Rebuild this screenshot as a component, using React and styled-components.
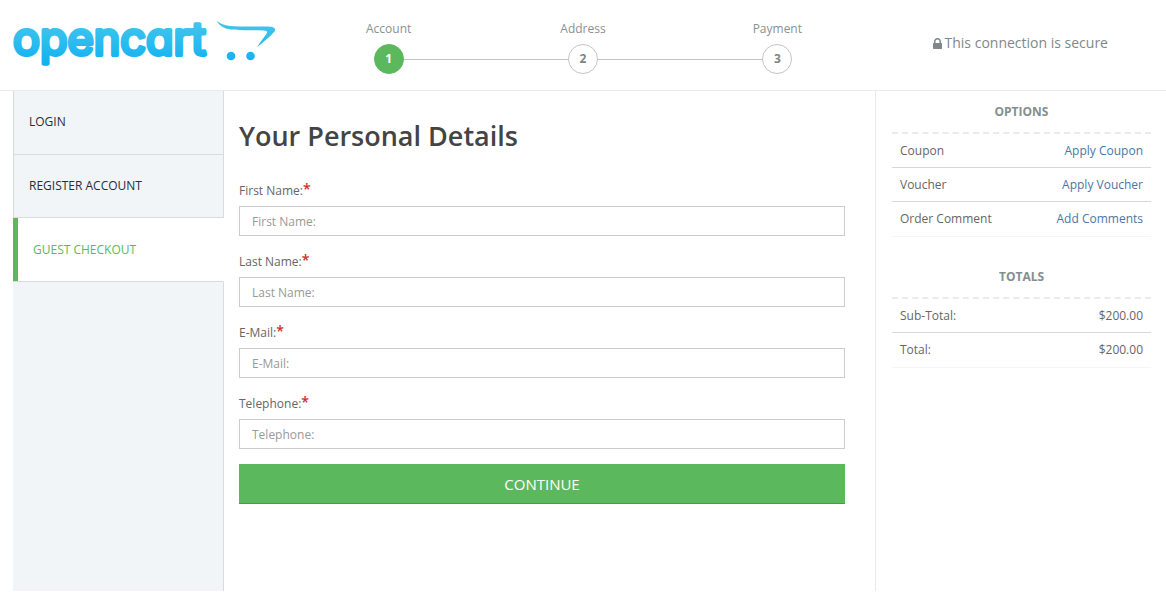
import React from "react";
import styled, { createGlobalStyle, css } from "styled-components";

const GlobalStyle = createGlobalStyle`
  *, *::before, *::after { box-sizing: border-box; }
  body {
    margin: 0;
    background: #fff;
    color: #666;
    font-family: "Open Sans", "Liberation Sans", sans-serif;
    font-size: 12px;
    line-height: 20px;
  }
`;

const Page = styled.div`
  display: flex;
  flex-direction: column;
  min-height: 100vh;
  padding-bottom: 10px;
`;

const Header = styled.header`
  display: grid;
  grid-template-columns: minmax(0, 1fr) minmax(0, 2fr) minmax(0, 1fr);
  min-height: 91px;
  border-bottom: 1px solid #ebebeb;
`;

const LogoLink = styled.a`
  display: block;
  padding-left: 10px;
`;

const LogoDrawing = styled.svg`
  display: block;
  overflow: visible;
`;

const Wordmark = styled.text`
  font-family: Inter, "Open Sans", sans-serif;
  font-size: 45px;
  font-weight: 400;
  font-feature-settings: "cv11";
  stroke-width: 4px;
  stroke-linejoin: round;
`;

const Steps = styled.ol`
  display: grid;
  grid-template-columns: repeat(3, minmax(0, 1fr));
  margin: 0;
  padding: 19px 0 0;
  list-style: none;
  color: #8a9191;
`;

const Step = styled.li`
  display: flex;
  flex-direction: column;
  gap: 5px;
  text-align: center;
`;

const StepTrack = styled.div`
  display: flex;
  align-items: center;
`;

const StepLine = styled.span`
  flex: 1;
  height: 1px;
  background: ${(p) => (p.$hidden ? "transparent" : "#c4c4c4")};
`;

const StepNumber = styled.span`
  width: 30px;
  height: 30px;
  border: 1px solid #c4c4c4;
  border-radius: 50%;
  line-height: 28px;
  font-weight: 700;
  color: #808585;
  ${(p) =>
    p.$active &&
    css`
      border-color: #5cb85c;
      background: #5cb85c;
      color: #fff;
    `}
`;

const Secure = styled.p`
  display: flex;
  justify-content: center;
  align-items: center;
  gap: 3px;
  margin: 0;
  padding-bottom: 4px;
  font-size: 14px;
  color: #7f8888;
`;

const Body = styled.div`
  flex: 1;
  display: grid;
  grid-template-columns: 211px minmax(0, 1fr) 291px;
  padding-left: 13px;
`;

const Sidebar = styled.aside`
  display: flex;
  flex-direction: column;
  background: #f1f5f8;
`;

const Menu = styled.nav`
  display: grid;
  grid-template-rows: repeat(3, 1fr);
  min-height: 191px;
`;

const MenuLink = styled.a`
  display: flex;
  align-items: center;
  padding: 0 15px;
  border: solid #d8dcde;
  border-width: 0 1px 1px;
  font-weight: 500;
  color: #2a2d35;
  text-decoration: none;
  text-transform: uppercase;
  ${(p) =>
    p.$active &&
    css`
      border-left: 0;
      border-right-color: #fff;
      background: #fff;
      box-shadow: inset 5px 0 #5cb85c;
      padding-left: 20px;
      color: #5cb85c;
    `}
`;

const SidebarFill = styled.div`
  flex: 1;
  border-right: 1px solid #d8dcde;
`;

const Main = styled.main`
  padding: 27px 30px 0 15px;
`;

const Title = styled.h1`
  margin: 0 0 27px;
  font-size: 27px;
  line-height: 36px;
  font-weight: 600;
  color: #444;
`;

const Field = styled.div`
  display: flex;
  flex-direction: column;
  gap: 5px;
  margin-bottom: 16px;
  &:last-of-type {
    margin-bottom: 15px;
  }
`;

const Label = styled.label`
  display: flex;
  height: 20px;
`;

const Star = styled.span`
  font-size: 14px;
  line-height: 16px;
  font-weight: 600;
  color: #c9302c;
`;

const Input = styled.input`
  width: 100%;
  height: 30px;
  padding: 0 12px;
  border: 1px solid #ccc;
  border-radius: 0;
  background: #fff;
  font: inherit;
  color: #555;
  &::placeholder {
    color: #999;
    opacity: 1;
  }
`;

const Continue = styled.button`
  display: block;
  width: 100%;
  height: 40px;
  border: 0;
  border-bottom: 1px solid #4a9a4e;
  background: #5cb85c;
  font: inherit;
  font-size: 15px;
  color: #fff;
  text-transform: uppercase;
`;

const Summary = styled.aside`
  padding: 11px 15px 0 16px;
  border-left: 1px solid #e9e9e9;
`;

const Panel = styled.section`
  margin-bottom: 30px;
`;

const PanelTitle = styled.h2`
  margin: 0;
  padding-bottom: 10px;
  border-bottom: 2px dashed #ebebeb;
  font-size: 12px;
  line-height: 20px;
  font-weight: 700;
  text-align: center;
  text-transform: uppercase;
  color: #858e8e;
`;

const Table = styled.table`
  width: 100%;
  border-spacing: 0;
`;

const Row = styled.tr`
  & > * {
    height: 34px;
    padding: 0 8px;
    border-bottom: 1px solid #d8d8d8;
    font-weight: 400;
    text-align: left;
  }
  & > td {
    text-align: right;
  }
  &:last-child > * {
    height: 35px;
    border-bottom-color: #f5f5f5;
  }
`;

const ActionLink = styled.a`
  color: #4a76a8;
  text-decoration: none;
`;

function Logo() {
  return (
    <LogoDrawing width="270" height="76" viewBox="10 0 270 76" role="img" aria-label="opencart">
      <defs>
        <linearGradient id="brand" gradientUnits="userSpaceOnUse" x1="0" y1="20" x2="0" y2="66">
          <stop offset="0" stopColor="#45c6ec" />
          <stop offset="1" stopColor="#0fb0f2" />
        </linearGradient>
      </defs>
      <Wordmark x="13" y="55" fill="url(#brand)" stroke="url(#brand)">
        opencart
      </Wordmark>
      <path
        d="M216.500 20.500C220 24 226 25.800 234 26.300C245 27 258 26.200 268 26.500C274 26.800 276.500 28.500 274.500 31.500C270.500 36.500 264 41.500 257 47.200C260 42.500 264 37.500 266.500 33.800C267.800 31.500 267 30.600 264 30.500C252 30 242 30.800 231 29.600C223.500 28.600 219 25.500 216.500 20.500Z"
        fill="url(#brand)"
      />
      <circle cx="231" cy="56" r="4.300" fill="url(#brand)" />
      <circle cx="250.500" cy="56" r="4.300" fill="url(#brand)" />
    </LogoDrawing>
  );
}

function LockIcon() {
  return (
    <svg width="9" height="11" viewBox="0 0 1152 1408" fill="currentColor" aria-hidden="true">
      <path
        transform="matrix(1 0 0 -1 0 1408)"
        d="M320 768h512v192q0 106 -75 181t-181 75t-181 -75t-75 -181v-192zM1152 672v-576q0 -40 -28 -68t-68 -28h-960q-40 0 -68 28t-28 68v576q0 40 28 68t68 28h32v192q0 184 132 316t316 132t316 -132t132 -316v-192h32q40 0 68 -28t28 -68z"
      />
    </svg>
  );
}

const steps = ["Account", "Address", "Payment"];
const menu = ["Login", "Register Account", "Guest Checkout"];
const fields = [
  { id: "firstname", label: "First Name:", type: "text" },
  { id: "lastname", label: "Last Name:", type: "text" },
  { id: "email", label: "E-Mail:", type: "email" },
  { id: "telephone", label: "Telephone:", type: "tel" },
];
const options = [
  ["Coupon", "Apply Coupon"],
  ["Voucher", "Apply Voucher"],
  ["Order Comment", "Add Comments"],
];
const totals = [
  ["Sub-Total:", "$200.00"],
  ["Total:", "$200.00"],
];

export default function App() {
  return (
    <Page>
      <GlobalStyle />
      <Header>
        <LogoLink href="#home">
          <Logo />
        </LogoLink>
        <Steps>
          {steps.map((name, i) => (
            <Step key={name}>
              {name}
              <StepTrack>
                <StepLine $hidden={i === 0} />
                <StepNumber $active={i === 0}>{i + 1}</StepNumber>
                <StepLine $hidden={i === steps.length - 1} />
              </StepTrack>
            </Step>
          ))}
        </Steps>
        <Secure>
          <LockIcon />
          This connection is secure
        </Secure>
      </Header>
      <Body>
        <Sidebar>
          <Menu>
            {menu.map((name, i) => (
              <MenuLink key={name} href="#account" $active={i === 2}>
                {name}
              </MenuLink>
            ))}
          </Menu>
          <SidebarFill />
        </Sidebar>
        <Main>
          <Title>Your Personal Details</Title>
          <form onSubmit={(e) => e.preventDefault()}>
            {fields.map((f) => (
              <Field key={f.id}>
                <Label htmlFor={f.id}>
                  {f.label}
                  <Star>*</Star>
                </Label>
                <Input id={f.id} type={f.type} placeholder={f.label} />
              </Field>
            ))}
            <Continue type="submit">Continue</Continue>
          </form>
        </Main>
        <Summary>
          <Panel>
            <PanelTitle>Options</PanelTitle>
            <Table>
              <tbody>
                {options.map(([name, action]) => (
                  <Row key={name}>
                    <th scope="row">{name}</th>
                    <td>
                      <ActionLink href="#options">{action}</ActionLink>
                    </td>
                  </Row>
                ))}
              </tbody>
            </Table>
          </Panel>
          <Panel>
            <PanelTitle>Totals</PanelTitle>
            <Table>
              <tbody>
                {totals.map(([name, amount]) => (
                  <Row key={name}>
                    <th scope="row">{name}</th>
                    <td>{amount}</td>
                  </Row>
                ))}
              </tbody>
            </Table>
          </Panel>
        </Summary>
      </Body>
    </Page>
  );
}
